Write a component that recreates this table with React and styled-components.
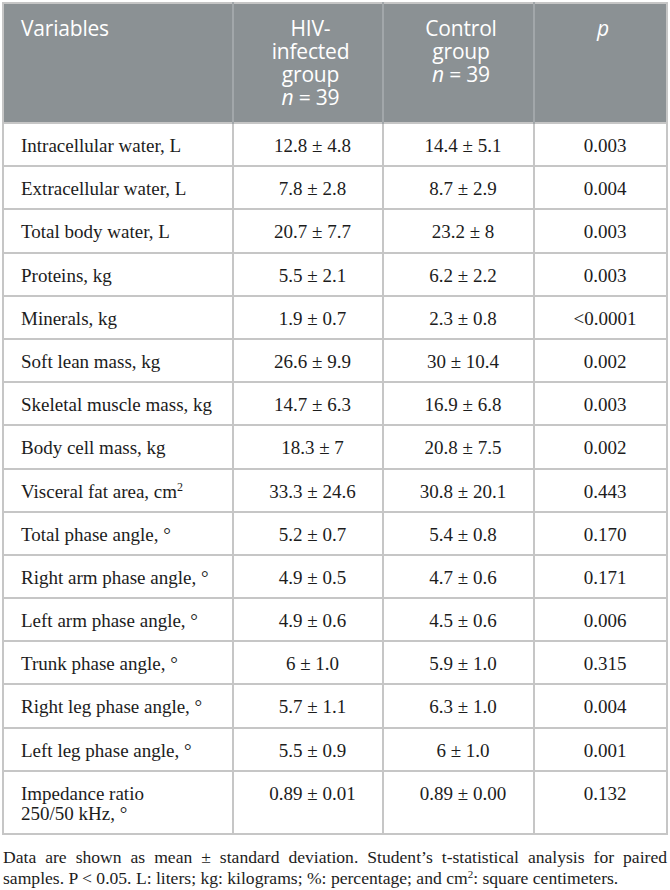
import styled, { createGlobalStyle } from "styled-components";

const GlobalStyle = createGlobalStyle`
  body {
    margin: 0;
    background: #ffffff;
  }
`;

const rows = [
  ["Intracellular water, L", "12.8 ± 4.8", "14.4 ± 5.1", "0.003"],
  ["Extracellular water, L", "7.8 ± 2.8", "8.7 ± 2.9", "0.004"],
  ["Total body water, L", "20.7 ± 7.7", "23.2 ± 8", "0.003"],
  ["Proteins, kg", "5.5 ± 2.1", "6.2 ± 2.2", "0.003"],
  ["Minerals, kg", "1.9 ± 0.7", "2.3 ± 0.8", "<0.0001"],
  ["Soft lean mass, kg", "26.6 ± 9.9", "30 ± 10.4", "0.002"],
  ["Skeletal muscle mass, kg", "14.7 ± 6.3", "16.9 ± 6.8", "0.003"],
  ["Body cell mass, kg", "18.3 ± 7", "20.8 ± 7.5", "0.002"],
  [
    <>
      Visceral fat area, cm<sup>2</sup>
    </>,
    "33.3 ± 24.6",
    "30.8 ± 20.1",
    "0.443",
  ],
  ["Total phase angle, °", "5.2 ± 0.7", "5.4 ± 0.8", "0.170"],
  ["Right arm phase angle, °", "4.9 ± 0.5", "4.7 ± 0.6", "0.171"],
  ["Left arm phase angle, °", "4.9 ± 0.6", "4.5 ± 0.6", "0.006"],
  ["Trunk phase angle, °", "6 ± 1.0", "5.9 ± 1.0", "0.315"],
  ["Right leg phase angle, °", "5.7 ± 1.1", "6.3 ± 1.0", "0.004"],
  ["Left leg phase angle, °", "5.5 ± 0.9", "6 ± 1.0", "0.001"],
  [
    <>
      Impedance ratio
      <br />
      250/50 kHz, °
    </>,
    "0.89 ± 0.01",
    "0.89 ± 0.00",
    "0.132",
  ],
];

function App() {
  return (
    <Page>
      <GlobalStyle />
      <Table>
        <colgroup>
          <col style={{ width: 230 }} />
          <col style={{ width: 150 }} />
          <col style={{ width: 151 }} />
          <col />
        </colgroup>
        <thead>
          <tr>
            <HeadCell $left>Variables</HeadCell>
            <HeadCell>
              HIV-
              <br />
              infected
              <br />
              group
              <br />
              <i>n</i> = 39
            </HeadCell>
            <HeadCell>
              Control
              <br />
              group
              <br />
              <i>n</i> = 39
            </HeadCell>
            <HeadCell>
              <i>p</i>
            </HeadCell>
          </tr>
        </thead>
        <tbody>
          {rows.map((row, i) => (
            <tr key={i}>
              <Cell $left>{row[0]}</Cell>
              <Cell>{row[1]}</Cell>
              <Cell>{row[2]}</Cell>
              <Cell>{row[3]}</Cell>
            </tr>
          ))}
        </tbody>
      </Table>
      <Note>
        Data are shown as mean ± standard deviation. Student’s t-statistical
        analysis for paired samples. P &lt; 0.05. L: liters; kg: kilograms; %:
        percentage; and cm<sup>2</sup>: square centimeters.
      </Note>
    </Page>
  );
}

const Page = styled.div`
  width: 670px;
  padding: 2px 2px 0 2px;
  box-sizing: border-box;
`;

const Table = styled.table`
  width: 100%;
  border-collapse: collapse;
  table-layout: fixed;
  border: 2px solid #c6c6c6;
`;

const HeadCell = styled.th`
  background: #8b9194;
  color: #ffffff;
  font-family: "Open Sans", "Lato", sans-serif;
  font-weight: 400;
  font-size: 21px;
  line-height: 23px;
  text-align: ${(p) => (p.$left ? "left" : "center")};
  vertical-align: top;
  padding: 13px 12px 10px 17px;
  height: 120px;
  box-sizing: border-box;
  border-left: 2px solid #a2a7aa;
  letter-spacing: -0.2px;

  &:first-child {
    border-left: none;
  }

  i {
    font-style: italic;
  }
`;

const Cell = styled.td`
  font-family: "Liberation Serif", "Times New Roman", serif;
  font-size: 19px;
  line-height: 20px;
  color: #1c1c1c;
  text-align: ${(p) => (p.$left ? "left" : "center")};
  vertical-align: top;
  padding: 12px 8px 9.2px 17px;
  border: 2px solid #c6c6c6;
  white-space: nowrap;

  sup {
    font-size: 12px;
    line-height: 0;
  }
`;

const Note = styled.p`
  margin: 12px 1px 0;
  font-family: "Liberation Serif", "Times New Roman", serif;
  font-size: 17.6px;
  line-height: 21px;
  color: #1c1c1c;
  text-align: justify;

  sup {
    font-size: 11px;
    line-height: 0;
    vertical-align: 6px;
  }
`;

export default App;
